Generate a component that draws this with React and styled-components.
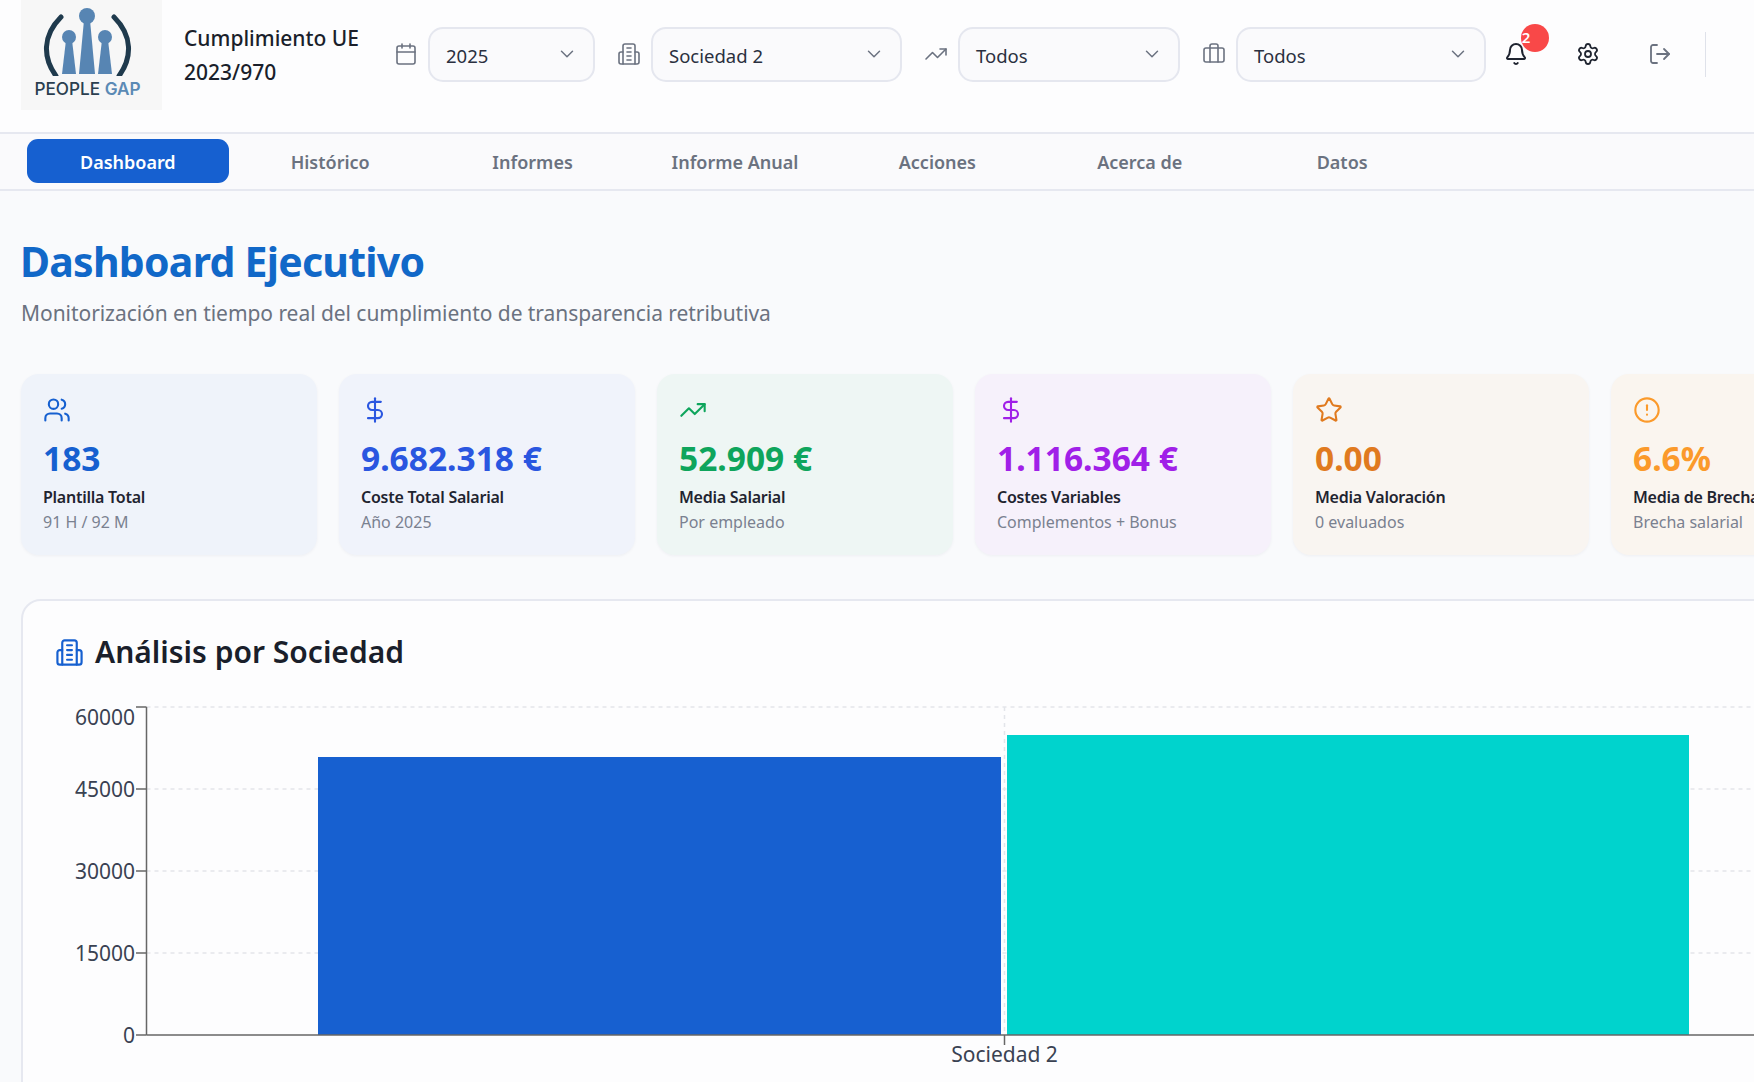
import React from 'react';
import styled, { createGlobalStyle } from 'styled-components';
import {
  AlertCircle,
  Bell,
  Briefcase,
  Calendar,
  ChevronDown,
  DollarSign,
  LogOut,
  Settings,
  Star,
  TrendingUp,
  Users,
} from 'lucide-react';

const GlobalStyle = createGlobalStyle`
  html, body {
    margin: 0;
    height: 100%;
    overflow: hidden;
    background: #f9fafc;
  }
  body {
    font-family: "Noto Sans", "Open Sans", "Liberation Sans", sans-serif;
    color: #1f2430;
  }
  * {
    box-sizing: border-box;
  }
`;

// tower with four window lines and two side wings
function BuildingIcon({ size = 24, color = 'currentColor', strokeWidth = 2 }) {
  return (
    <svg
      width={size}
      height={size}
      viewBox="0 0 24 24"
      fill="none"
      stroke={color}
      strokeWidth={strokeWidth}
      strokeLinecap="round"
      strokeLinejoin="round"
    >
      <path d="M6 22V4a2 2 0 0 1 2-2h8a2 2 0 0 1 2 2v18Z" />
      <path d="M6 10H4a2 2 0 0 0-2 2v8a2 2 0 0 0 2 2h2" />
      <path d="M18 10h2a2 2 0 0 1 2 2v8a2 2 0 0 1-2 2h-2" />
      <path d="M10 6h4" />
      <path d="M10 10h4" />
      <path d="M10 14h4" />
      <path d="M10 18h4" />
    </svg>
  );
}

const filters = [
  { icon: Calendar, value: '2025', width: 167 },
  { icon: BuildingIcon, value: 'Sociedad 2', width: 251 },
  { icon: TrendingUp, value: 'Todos', width: 222 },
  { icon: Briefcase, value: 'Todos', width: 250 },
];

const tabs = ['Dashboard', 'Histórico', 'Informes', 'Informe Anual', 'Acciones', 'Acerca de', 'Datos'];

const stats = [
  { icon: Users, value: '183', label: 'Plantilla Total', sub: '91 H / 92 M', bg: '#eff3fa', color: '#1660d0' },
  { icon: DollarSign, value: '9.682.318 €', label: 'Coste Total Salarial', sub: 'Año 2025', bg: '#f0f3fb', color: '#2a56e0' },
  { icon: TrendingUp, value: '52.909 €', label: 'Media Salarial', sub: 'Por empleado', bg: '#eef6f4', color: '#0ea55c' },
  { icon: DollarSign, value: '1.116.364 €', label: 'Costes Variables', sub: 'Complementos + Bonus', bg: '#f6f1fb', color: '#a020e8' },
  { icon: Star, value: '0.00', label: 'Media Valoración', sub: '0 evaluados', bg: '#f9f5f1', color: '#e07a1f' },
  { icon: AlertCircle, value: '6.6%', label: 'Media de Brecha', sub: 'Brecha salarial', bg: '#faf5ef', color: '#fb9a2b' },
];

const ticks = [
  { label: '60000', y: 8, textY: 26 },
  { label: '45000', y: 90, textY: 98 },
  { label: '30000', y: 172, textY: 180 },
  { label: '15000', y: 254, textY: 262 },
  { label: '0', y: 336, textY: 344 },
];

function Logo() {
  return (
    <LogoBox>
      <svg width="141" height="76" viewBox="0 0 141 76">
        <path d="M40 17 C21 36 22 58 35 76" fill="none" stroke="#1f3a4d" strokeWidth="5" strokeLinecap="round" />
        <path d="M93 17 C112 36 111 58 98 76" fill="none" stroke="#1f3a4d" strokeWidth="5" strokeLinecap="round" />
        <g fill="#5785b3">
          <circle cx="66" cy="16" r="8" />
          <path d="M63 20 H69 L74 74 H58 Z" />
          <circle cx="48" cy="37" r="7" />
          <path d="M45 40 H51 L55 74 H41 Z" />
          <circle cx="84" cy="37" r="7" />
          <path d="M81 40 H87 L91 74 H77 Z" />
        </g>
      </svg>
      <LogoText>
        PEOPLE <span>GAP</span>
      </LogoText>
    </LogoBox>
  );
}

function Chart() {
  return (
    <ChartSvg width="1840" height="400" viewBox="0 0 1840 400">
      <g stroke="#e3e5ea" strokeDasharray="4 4" strokeWidth="1.5" fill="none">
        {ticks.slice(0, 4).map((t) => (
          <line key={t.label} x1="91.5" x2="1840" y1={t.y} y2={t.y} />
        ))}
        <line x1="949.5" x2="949.5" y1="8" y2="336" />
      </g>
      <rect x="263" y="58" width="683" height="278" fill="#1760d0" />
      <rect x="952" y="36" width="682" height="300" fill="#00d3cd" />
      <g stroke="#666" strokeWidth="1.5" fill="none">
        <line x1="91.5" x2="91.5" y1="8" y2="336" />
        <line x1="91.5" x2="1840" y1="336" y2="336" />
        {ticks.map((t) => (
          <line key={t.label} x1="81" x2="91.5" y1={t.y} y2={t.y} />
        ))}
        <line x1="949.5" x2="949.5" y1="336" y2="346" />
      </g>
      <g fontSize="21" fill="#3a4252" textAnchor="end">
        {ticks.map((t) => (
          <text key={t.label} x="80" y={t.textY}>{t.label}</text>
        ))}
      </g>
      <text x="949.5" y="363" fontSize="21" fill="#3a4252" textAnchor="middle">Sociedad 2</text>
    </ChartSvg>
  );
}

export default function App() {
  return (
    <Page>
      <GlobalStyle />
      <Header>
        <Logo />
        <AppTitle>Cumplimiento UE 2023/970</AppTitle>
        <Filters>
          {filters.map(({ icon: Icon, value, width }) => (
            <FilterGroup key={value + width}>
              <Icon size={24} color="#6b7280" strokeWidth={1.6} />
              <SelectBox $width={width}>
                <SelectValue>{value}</SelectValue>
                <ChevronDown size={22} color="#6b7280" strokeWidth={1.6} />
              </SelectBox>
            </FilterGroup>
          ))}
        </Filters>
        <Actions>
          <ActionButton>
            <Bell size={24} color="#1f2430" strokeWidth={2} />
            <Badge>2</Badge>
          </ActionButton>
          <ActionButton>
            <Settings size={24} color="#1f2430" strokeWidth={1.8} />
          </ActionButton>
          <ActionButton>
            <LogOut size={24} color="#6b7280" strokeWidth={1.8} />
          </ActionButton>
        </Actions>
        <Divider />
      </Header>
      <Nav>
        {tabs.map((tab, i) => (
          <Tab key={tab} $active={i === 0}>{tab}</Tab>
        ))}
      </Nav>
      <Main>
        <Heading>Dashboard Ejecutivo</Heading>
        <Subtitle>Monitorización en tiempo real del cumplimiento de transparencia retributiva</Subtitle>
        <Cards>
          {stats.map(({ icon: Icon, value, label, sub, bg, color }) => (
            <Card key={label} $bg={bg}>
              <Icon size={28} color={color} strokeWidth={1.8} />
              <Value $color={color}>{value}</Value>
              <Label>{label}</Label>
              <Sub>{sub}</Sub>
            </Card>
          ))}
        </Cards>
        <Panel>
          <PanelTitle>
            <BuildingIcon size={29} color="#1660d0" strokeWidth={1.8} />
            Análisis por Sociedad
          </PanelTitle>
          <Chart />
        </Panel>
      </Main>
    </Page>
  );
}

const Page = styled.div`
  width: 1754px;
  height: 1082px;
  overflow: hidden;
`;

const Header = styled.header`
  display: flex;
  align-items: center;
  height: 134px;
  padding: 0 0 24px 21px;
  background: #fdfdfe;
  border-bottom: 2px solid #e6e8f0;
`;

const LogoBox = styled.div`
  display: flex;
  flex-direction: column;
  align-items: center;
  align-self: flex-start;
  flex: none;
  width: 141px;
  height: 110px;
  background: #f7f7f7;
  overflow: hidden;
`;

const LogoText = styled.div`
  margin-top: 3px;
  padding-right: 8px;
  font-family: "Inter", "Noto Sans", sans-serif;
  font-size: 17.2px;
  font-weight: 500;
  line-height: 20px;
  white-space: nowrap;
  color: #2b3f50;

  span {
    font-weight: 600;
    color: #5b8ab5;
  }
`;

const AppTitle = styled.div`
  flex: none;
  width: 187px;
  margin: 2px 0 0 22px;
  font-size: 21px;
  font-weight: 500;
  line-height: 34px;
  color: #1a1f2b;
`;

const Filters = styled.div`
  display: flex;
  align-items: center;
  gap: 22px;
  margin-left: 23px;
`;

const FilterGroup = styled.div`
  display: flex;
  align-items: center;
  gap: 10px;
`;

const SelectBox = styled.div`
  display: flex;
  align-items: center;
  justify-content: space-between;
  width: ${(p) => p.$width}px;
  height: 55px;
  padding: 0 15px 0 16px;
  background: #fafafc;
  border: 2px solid #e5e7ef;
  border-radius: 15px;
  font-size: 18.5px;
  color: #2a3040;
`;

const SelectValue = styled.span`
  padding-top: 3px;
`;

const Actions = styled.div`
  display: flex;
  align-items: center;
  gap: 48px;
  margin-left: 18px;
`;

const ActionButton = styled.div`
  position: relative;
  display: flex;
  width: 24px;
  height: 24px;
`;

const Badge = styled.span`
  position: absolute;
  top: -18px;
  left: 17px;
  width: 28px;
  height: 28px;
  padding-right: 18px;
  border-radius: 50%;
  background: #f94848;
  color: #fff;
  font-size: 15px;
  font-weight: 600;
  line-height: 26px;
  text-align: center;
`;

const Divider = styled.div`
  width: 1px;
  height: 45px;
  margin-left: 33px;
  background: #dfe2ea;
`;

const Nav = styled.nav`
  display: flex;
  gap: 0.8px;
  height: 57px;
  padding: 5px 27px;
  background: #fafafc;
  border-bottom: 2px solid #e6e8f0;
`;

const Tab = styled.div`
  width: 201.6px;
  height: 44px;
  padding-top: 2px;
  border-radius: 11px;
  background: ${(p) => (p.$active ? '#1660d0' : 'transparent')};
  color: ${(p) => (p.$active ? '#fff' : '#6b7280')};
  font-size: 18px;
  font-weight: 600;
  line-height: 42px;
  text-align: center;
`;

const Main = styled.main`
  padding: 0 0 0 21px;
`;

const Heading = styled.h1`
  margin: 42px 0 0 -1px;
  font-size: 41px;
  font-weight: 700;
  line-height: 56px;
  letter-spacing: -0.75px;
  color: #1168c8;
`;

const Subtitle = styled.p`
  margin: 9px 0 0;
  font-size: 21px;
  line-height: 30px;
  letter-spacing: -0.05px;
  color: #6b7280;
`;

const Cards = styled.div`
  display: flex;
  gap: 22px;
  margin-top: 46px;
`;

const Card = styled.div`
  flex: none;
  width: 296px;
  height: 181px;
  padding: 22px;
  border-radius: 18px;
  background: ${(p) => p.$bg};
  box-shadow: 0 1px 3px rgba(30, 40, 70, 0.05);
`;

const Value = styled.div`
  margin-top: 8px;
  font-size: 33.5px;
  font-weight: 700;
  line-height: 42px;
  color: ${(p) => p.$color};
`;

const Label = styled.div`
  margin-top: 6px;
  font-size: 16px;
  font-weight: 600;
  line-height: 24px;
  letter-spacing: -0.25px;
  color: #1f2430;
  white-space: nowrap;
`;

const Sub = styled.div`
  margin-top: 1px;
  font-size: 16px;
  line-height: 24px;
  color: #7a8190;
  white-space: nowrap;
`;

const Panel = styled.section`
  width: 1880px;
  height: 700px;
  margin-top: 44px;
  padding: 30px 0 0 32px;
  background: #fdfdfe;
  border: 2px solid #e6e8f0;
  border-radius: 20px;
`;

const PanelTitle = styled.h2`
  display: flex;
  align-items: center;
  gap: 11px;
  margin: 0;
  font-size: 30px;
  font-weight: 600;
  line-height: 42px;
  color: #1a1f2b;
`;

const ChartSvg = styled.svg`
  display: block;
  margin-top: 26px;
`;
